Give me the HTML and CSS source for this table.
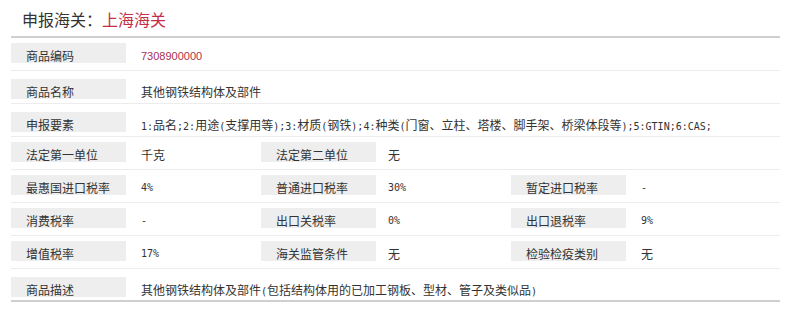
FILE: index.html
```html
<!DOCTYPE html>
<html lang="zh-CN">
<head>
<meta charset="utf-8">
<title>申报海关</title>
<link rel="stylesheet" href="styles.css">
</head>
<body>
<div class="panel">
  <div class="title">申报海关：<span class="red">上海海关</span></div>
  <div class="row">
    <div class="lab">商品编码</div>
    <div class="val wide code">7308900000</div>
  </div>
  <div class="row row-tall">
    <div class="lab">商品名称</div>
    <div class="val wide">其他钢铁结构体及部件</div>
  </div>
  <div class="row row-tall">
    <div class="lab">申报要素</div>
    <div class="val wide"><span class="m">1:</span>品名<span class="m">;2:</span>用途<span class="m">(</span>支撑用等<span class="m">);3:</span>材质<span class="m">(</span>钢铁<span class="m">);4:</span>种类<span class="m">(</span>门窗、立柱、塔楼、脚手架、桥梁体段等<span class="m">);5:GTIN;6:CAS;</span></div>
  </div>
  <div class="row">
    <div class="lab">法定第一单位</div>
    <div class="val">千克</div>
    <div class="lab">法定第二单位</div>
    <div class="val">无</div>
  </div>
  <div class="row">
    <div class="lab">最惠国进口税率</div>
    <div class="val num">4%</div>
    <div class="lab">普通进口税率</div>
    <div class="val num">30%</div>
    <div class="lab">暂定进口税率</div>
    <div class="val num">-</div>
  </div>
  <div class="row">
    <div class="lab">消费税率</div>
    <div class="val num">-</div>
    <div class="lab">出口关税率</div>
    <div class="val num">0%</div>
    <div class="lab">出口退税率</div>
    <div class="val num">9%</div>
  </div>
  <div class="row">
    <div class="lab">增值税率</div>
    <div class="val num">17%</div>
    <div class="lab">海关监管条件</div>
    <div class="val">无</div>
    <div class="lab">检验检疫类别</div>
    <div class="val">无</div>
  </div>
  <div class="row row-tall row-last">
    <div class="lab">商品描述</div>
    <div class="val wide">其他钢铁结构体及部件<span class="m">(</span>包括结构体用的已加工钢板、型材、管子及类似品<span class="m">)</span></div>
  </div>
</div>
</body>
</html>
```

FILE: styles.css
```css
html, body {
  margin: 0;
  padding: 0;
  background: #ffffff;
}

body {
  font-family: "Noto Sans CJK SC", "Noto Sans", sans-serif;
  color: #333333;
}

.panel {
  width: 769px;
  margin-left: 11px;
}

.title {
  height: 36px;
  line-height: 38px;
  padding-left: 11px;
  font-size: 16px;
  color: #333333;
  border-bottom: 2px solid #cfcfcf;
  white-space: nowrap;
}

.red {
  color: #c42d48;
}

.row {
  display: grid;
  grid-template-columns: 115px 135px 115px 135px 115px 1fr;
  height: 32px;
  align-items: start;
  border-bottom: 1px solid #ececec;
}

.row-last {
  border-bottom: 2px solid #cfcfcf;
  height: 31px;
}

.lab,
.val {
  box-sizing: border-box;
  height: 20px;
  margin-top: 5px;
  padding-top: 3px;
  line-height: 20px;
  font-size: 12px;
  white-space: nowrap;
}

.row-tall .lab,
.row-tall .val {
  margin-top: 8px;
}

.lab {
  background: #eeeeee;
  padding-left: 15px;
  color: #333333;
}

.val {
  padding-left: 15px;
  color: #333333;
}

.row > .val:nth-child(4) {
  padding-left: 12px;
}

.wide {
  grid-column: 2 / -1;
}

.m,
.num {
  font-family: "DejaVu Sans Mono", "Liberation Mono", monospace;
  font-size: 10px;
}

.code {
  font-family: "Liberation Sans", Arial, sans-serif;
  font-size: 11px;
  color: #a8304f;
}
```
